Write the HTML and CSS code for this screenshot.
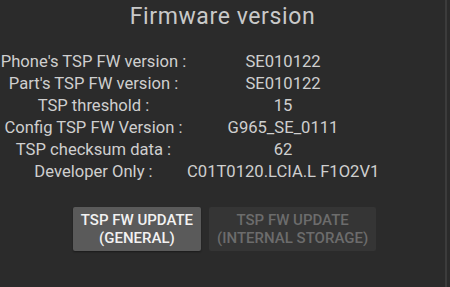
FILE: index.html
```html
<!DOCTYPE html>
<html>
<head>
<meta charset="utf-8">
<link rel="stylesheet" href="styles.css">
</head>
<body>
<div class="screen">
  <div class="main">
    <h1 class="title">Firmware version</h1>
    <div class="info">
      <div class="label">Phone's TSP FW version :</div><div class="value">SE010122</div>
      <div class="label">Part's TSP FW version :</div><div class="value">SE010122</div>
      <div class="label">TSP threshold :</div><div class="value">15</div>
      <div class="label">Config TSP FW Version :</div><div class="value">G965_SE_0111</div>
      <div class="label">TSP checksum data :</div><div class="value">62</div>
      <div class="label">Developer Only :</div><div class="value">C01T0120.LCIA.L F1O2V1</div>
    </div>
    <div class="buttons">
      <button class="btn">TSP FW UPDATE<br>(GENERAL)</button>
      <button class="btn disabled">TSP FW UPDATE<br>(INTERNAL STORAGE)</button>
    </div>
  </div>
  <div class="edge"></div>
</div>
</body>
</html>
```
FILE: styles.css
```css
html, body {
  margin: 0;
  padding: 0;
  background: #2b2b2b;
}
.screen {
  display: flex;
  width: 450px;
  height: 287px;
  overflow: hidden;
  font-family: Roboto, "Noto Sans", sans-serif;
}
.main {
  width: 445px;
  display: flex;
  flex-direction: column;
}
.edge {
  width: 2px;
  background: #3c3c3c;
}
.title {
  margin: 4px 0 0 0;
  font-size: 23px;
  letter-spacing: 0.6px;
  font-weight: 400;
  line-height: 26px;
  color: #c9c9c9;
  text-align: center;
}
.info {
  margin-top: 21px;
  display: grid;
  grid-template-columns: 187px 192px;
  grid-auto-rows: 22px;
  font-size: 16.6px;
  line-height: 22px;
  color: #cfcfcf;
}
.label, .value {
  text-align: center;
  white-space: nowrap;
}
.buttons {
  margin-top: 24px;
  display: flex;
  justify-content: center;
  gap: 8px;
  padding-left: 4px;
}
.btn {
  height: 44px;
  padding: 0 8px;
  border: none;
  border-radius: 2px;
  background: #5a5a5a;
  color: #f2f2f2;
  font-family: Roboto, "Noto Sans", sans-serif;
  font-size: 15px;
  font-weight: 500;
  line-height: 18px;
  box-shadow: 0 1px 2px rgba(0,0,0,0.4);
}
.btn.disabled {
  background: #353535;
  color: #6c6c6c;
  box-shadow: none;
}
```
